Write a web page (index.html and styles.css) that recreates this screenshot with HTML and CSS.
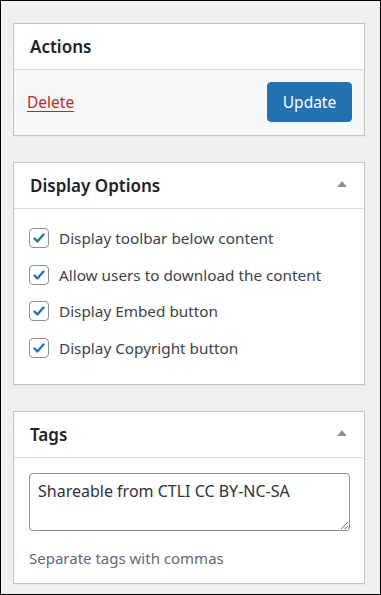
FILE: index.html
```html
<!DOCTYPE html>
<html lang="en">
  <head>
    <meta charset="UTF-8" />
    <meta name="viewport" content="width=device-width, initial-scale=1.0" />
    <title>Edit Content Sidebar</title>
    <link rel="stylesheet" href="styles.css">
  </head>
  <body>
    <div class="sidebar">
      <div class="postbox">
        <div class="postbox-header">
          <h2>Actions</h2>
        </div>
        <div class="major-actions">
          <a href="#" class="delete-link">Delete</a>
          <button class="button-primary">Update</button>
        </div>
      </div>

      <div class="postbox">
        <div class="postbox-header">
          <h2>Display Options</h2>
          <span class="toggle-arrow"></span>
        </div>
        <div class="inside options">
          <label class="option">
            <span class="checkbox"><svg viewBox="0 0 20 20" width="20" height="20"><path d="M5 10.5l3.2 3.3L15 6.2" fill="none" stroke="#2271b1" stroke-width="2.6" stroke-linecap="round" stroke-linejoin="round"/></svg></span>
            Display toolbar below content
          </label>
          <label class="option">
            <span class="checkbox"><svg viewBox="0 0 20 20" width="20" height="20"><path d="M5 10.5l3.2 3.3L15 6.2" fill="none" stroke="#2271b1" stroke-width="2.6" stroke-linecap="round" stroke-linejoin="round"/></svg></span>
            Allow users to download the content
          </label>
          <label class="option">
            <span class="checkbox"><svg viewBox="0 0 20 20" width="20" height="20"><path d="M5 10.5l3.2 3.3L15 6.2" fill="none" stroke="#2271b1" stroke-width="2.6" stroke-linecap="round" stroke-linejoin="round"/></svg></span>
            Display Embed button
          </label>
          <label class="option">
            <span class="checkbox"><svg viewBox="0 0 20 20" width="20" height="20"><path d="M5 10.5l3.2 3.3L15 6.2" fill="none" stroke="#2271b1" stroke-width="2.6" stroke-linecap="round" stroke-linejoin="round"/></svg></span>
            Display Copyright button
          </label>
        </div>
      </div>

      <div class="postbox">
        <div class="postbox-header">
          <h2>Tags</h2>
          <span class="toggle-arrow"></span>
        </div>
        <div class="inside tags">
          <textarea class="tag-input">Shareable from CTLI CC BY-NC-SA</textarea>
          <p class="howto">Separate tags with commas</p>
        </div>
      </div>
    </div>
  </body>
</html>
```

FILE: styles.css
```css
* {
  box-sizing: border-box;
}
body {
  margin: 0;
  font-family: "Noto Sans", "Open Sans", sans-serif;
  color: #1d2327;
}
.sidebar {
  height: 595px;
  border: 1px solid #000;
  background-color: #f0f0f1;
  padding: 22px 15px 0 12px;
  display: flex;
  flex-direction: column;
  gap: 26px;
}
.postbox {
  background-color: #fff;
  border: 1px solid #c3c4c7;
  box-shadow: 0 1px 1px rgba(0, 0, 0, 0.04);
}
.postbox-header {
  height: 46px;
  border-bottom: 1px solid #dcdcde;
  display: flex;
  align-items: center;
  justify-content: space-between;
  padding: 0 17px 0 16px;
}
.postbox-header h2 {
  margin: 0;
  font-size: 17px;
  font-weight: 600;
}
.toggle-arrow {
  width: 0;
  height: 0;
  border-left: 5px solid transparent;
  border-right: 5px solid transparent;
  border-bottom: 6px solid #8c8f94;
  margin-top: -4px;
}
.major-actions {
  height: 65px;
  background-color: #f6f7f7;
  display: flex;
  align-items: center;
  justify-content: space-between;
  padding: 0 12px 2px 13px;
}
.delete-link {
  color: #b32d2e;
  font-size: 15.5px;
  text-decoration: underline;
  text-underline-offset: 3px;
}
.button-primary {
  height: 40px;
  width: 85px;
  padding: 0;
  background-color: #2271b1;
  color: #fff;
  border: 1px solid #2271b1;
  border-radius: 4px;
  font-family: inherit;
  font-size: 15.5px;
  cursor: pointer;
}
.options {
  padding: 19px 15px 26px;
  display: flex;
  flex-direction: column;
  gap: 16.7px;
}
.option {
  display: flex;
  align-items: center;
  gap: 10px;
  font-size: 15.3px;
  line-height: 20px;
  color: #3c434a;
}
.checkbox {
  width: 20px;
  height: 20px;
  border: 1px solid #8c8f94;
  border-radius: 4px;
  display: flex;
  align-items: center;
  justify-content: center;
}
.checkbox svg {
  width: 18px;
  height: 18px;
}
.tags {
  padding: 15px 15px 0 15px;
}
.tag-input {
  display: block;
  width: 321px;
  height: 58px;
  border: 1px solid #8c8f94;
  border-radius: 4px;
  padding: 6px 8px;
  font-family: inherit;
  font-size: 16px;
  color: #2c3338;
}
.howto {
  margin: 17px 0 15px;
  font-size: 15px;
  color: #646970;
}
```
